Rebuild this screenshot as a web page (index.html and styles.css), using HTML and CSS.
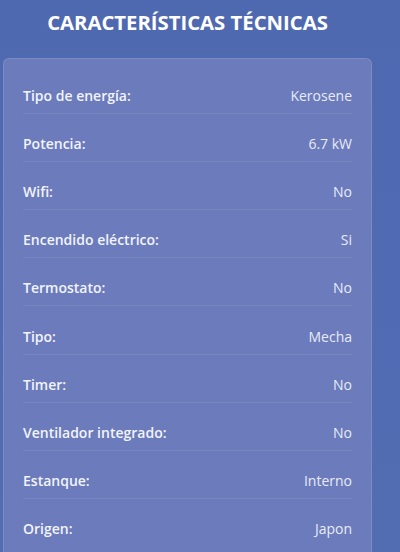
FILE: index.html
```html
<!DOCTYPE html>
<html lang="es">
<head>
    <meta charset="UTF-8">
    <meta name="viewport" content="width=device-width, initial-scale=1.0">
    <title>Características técnicas</title>
    <link rel="stylesheet" href="styles.css">
</head>
<body>
    <div class="specs">
        <h1>CARACTERÍSTICAS TÉCNICAS</h1>

        <div class="card">
            <div class="row"><span class="label">Tipo de energía:</span><span class="value">Kerosene</span></div>
            <div class="row"><span class="label">Potencia:</span><span class="value">6.7 kW</span></div>
            <div class="row"><span class="label">Wifi:</span><span class="value">No</span></div>
            <div class="row"><span class="label">Encendido eléctrico:</span><span class="value">Si</span></div>
            <div class="row"><span class="label">Termostato:</span><span class="value">No</span></div>
            <div class="row"><span class="label">Tipo:</span><span class="value">Mecha</span></div>
            <div class="row"><span class="label">Timer:</span><span class="value">No</span></div>
            <div class="row"><span class="label">Ventilador integrado:</span><span class="value">No</span></div>
            <div class="row"><span class="label">Estanque:</span><span class="value">Interno</span></div>
            <div class="row"><span class="label">Origen:</span><span class="value">Japon</span></div>
        </div>
    </div>
</body>
</html>
```

FILE: styles.css
```css
body {
    margin: 0;
    font-family: "Open Sans", "Noto Sans", sans-serif;
    background: linear-gradient(180deg, #4f69b1 0%, #526db2 100%);
    color: #eef1fa;
    height: 552px;
    overflow: hidden;
}
.specs {
    width: 369px;
    margin-left: 3px;
}
h1 {
    margin: 0;
    padding-top: 8px;
    height: 58px;
    box-sizing: border-box;
    font-size: 20.3px;
    line-height: 28px;
    font-weight: 700;
    text-align: center;
    color: #fff;
}
.card {
    background: #6b7bbb;
    border: 1px solid rgba(255, 255, 255, 0.12);
    border-radius: 6px;
    padding: 7px 19px 30px;
}
.row {
    display: flex;
    justify-content: space-between;
    padding: 20.1px 0 7px;
    font-size: 14px;
    line-height: 20px;
    border-bottom: 1px solid rgba(255, 255, 255, 0.08);
}
.row:last-child {
    border-bottom: none;
}
.label {
    font-weight: 600;
    color: #f2f4fb;
}
.value {
    color: #e8ebf7;
}
```
